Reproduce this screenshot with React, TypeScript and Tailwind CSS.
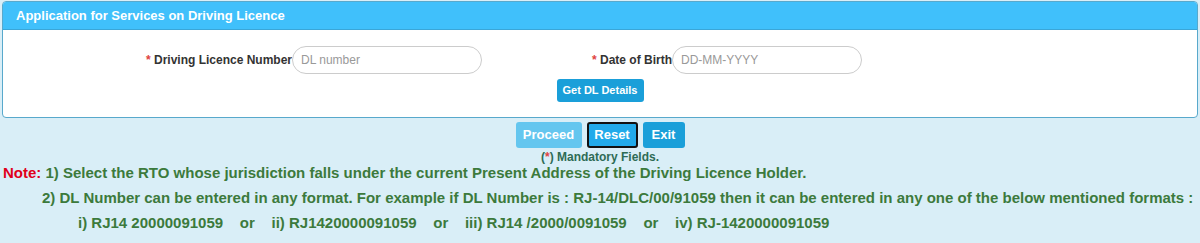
import React from 'react';

const font = { fontFamily: '"Liberation Sans", Arial, sans-serif' };

export default function App() {
  return (
    <div className="w-[1200px] h-[243px] bg-[#d9eef7] overflow-hidden" style={font}>
      {/* Panel */}
      <div className="pt-[1px] px-[2px]">
        <div className="border border-[#58a9cc] rounded-[4px] bg-white overflow-hidden">
          <div className="h-[28px] bg-[#40c0fb] border-b border-[#3aa6d8] pl-[13px] flex items-center">
            <span className="text-white font-bold text-[13px]">Application for Services on Driving Licence</span>
          </div>
          <div className="h-[87px] flex flex-col items-center">
            <div className="w-full flex items-center mt-[16px]">
              <label className="w-[289px] text-right text-[12px] font-bold text-[#333]">
                <span className="text-[#e04343]">*</span> Driving Licence Number
              </label>
              <input
                placeholder="DL number"
                className="w-[190px] h-[28px] rounded-[14px] border border-[#ccc] px-[8px] text-[12px] text-[#555] placeholder:text-[#999] outline-none"
              />
              <label className="w-[190px] text-right text-[12px] font-bold text-[#333]">
                <span className="text-[#e04343]">*</span> Date of Birth
              </label>
              <input
                placeholder="DD-MM-YYYY"
                className="w-[190px] h-[28px] rounded-[14px] border border-[#ccc] px-[8px] text-[12px] text-[#555] placeholder:text-[#999] outline-none"
              />
            </div>
            <button className="mt-[5px] h-[23px] px-[6px] rounded-[3px] bg-[#1a9fd9] text-white font-bold text-[11px]">
              Get DL Details
            </button>
          </div>
        </div>
      </div>

      {/* Action buttons */}
      <div className="flex justify-center gap-[5px] mt-[4px]">
        <button className="h-[26px] w-[66px] rounded-[3px] bg-[#64c6ef] text-white font-bold text-[13px]">Proceed</button>
        <button className="h-[26px] w-[51px] rounded-[3px] bg-[#21aaea] border-2 border-[#111] text-white font-bold text-[13px]">Reset</button>
        <button className="h-[26px] w-[42px] rounded-[3px] bg-[#1a9fd9] text-white font-bold text-[13px]">Exit</button>
      </div>
      <div className="text-center text-[12px] font-bold text-[#2e6b55] leading-[14px] mt-[2px]">
        (<span className="text-[#e04343]">*</span>) Mandatory Fields.
      </div>

      {/* Notes */}
      <div className="text-[15px] font-bold text-[#3c7a3c] leading-[25px] -mt-[4px]">
        <div className="pl-[3px]">
          <span className="text-[#e0001b]">Note:</span> 1) Select the RTO whose jurisdiction falls under the current Present Address of the Driving Licence Holder.
        </div>
        <div className="pl-[42px]">
          2) DL Number can be entered in any format. For example if DL Number is : RJ-14/DLC/00/91059 then it can be entered in any one of the below mentioned formats :
        </div>
        <div className="pl-[78px] whitespace-pre">
          {'i) RJ14 20000091059    or    ii) RJ1420000091059    or    iii) RJ14 /2000/0091059    or    iv) RJ-1420000091059'}
        </div>
      </div>
    </div>
  );
}
